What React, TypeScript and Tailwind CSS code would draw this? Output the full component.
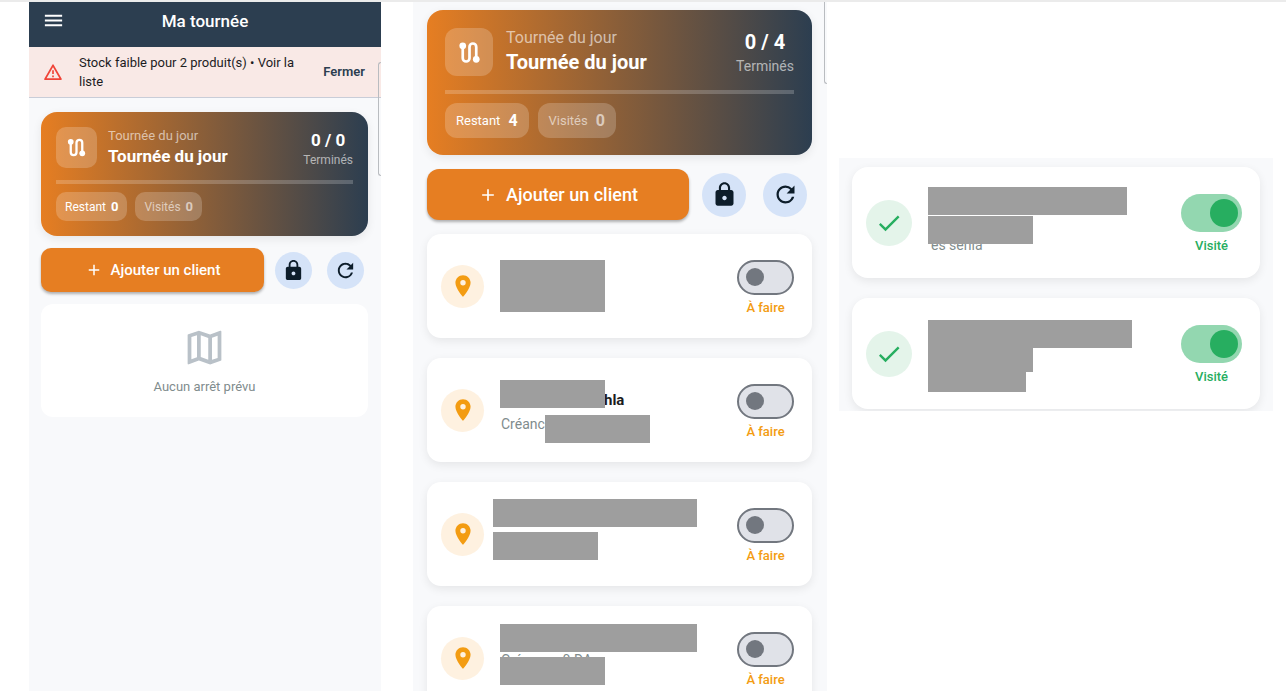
import { useState } from 'react'
import type { ReactNode } from 'react'
import { MdAdd, MdCheck, MdLocationOn, MdLock, MdMenu, MdOutlineMap, MdRefresh } from 'react-icons/md'

type Size = 'sm' | 'lg'

type Stop = {
  id: string
  visited: boolean
  name?: string
  detail?: string
  detailClass?: string
  // Grey bars laid over the private parts of a stop.
  masks: string[]
}

const pendingStops: Stop[] = [
  { id: 'p1', visited: false, masks: ['left-0 top-[26px] h-[52px] w-[105px]'] },
  {
    id: 'p2',
    visited: false,
    name: 'hla',
    detail: 'Créance',
    detailClass: 'pl-px pt-1',
    masks: ['left-0 top-[22px] h-[28px] w-[105px]', 'left-[45px] top-[57px] h-[28px] w-[105px]'],
  },
  {
    id: 'p3',
    visited: false,
    masks: ['-left-[7px] top-[17px] h-[28px] w-[204px]', '-left-[7px] top-[50px] h-[28px] w-[105px]'],
  },
  {
    id: 'p4',
    visited: false,
    detail: 'Créance : 0 DA',
    detailClass: 'pl-px pt-[44px]',
    masks: ['left-0 top-[18px] h-[28px] w-[197px]', 'left-0 top-[51px] h-[28px] w-[105px]'],
  },
]

const visitedStops: Stop[] = [
  {
    id: 'v1',
    visited: true,
    detail: 'es senia',
    detailClass: 'pl-[3px] pt-[68px]',
    masks: ['left-0 top-[20px] h-[28px] w-[199px]', 'left-0 top-[49px] h-[28px] w-[105px]'],
  },
  {
    id: 'v2',
    visited: true,
    masks: [
      'left-0 top-[22px] h-[28px] w-[204px]',
      'left-0 top-[50px] h-[24px] w-[105px]',
      'left-0 top-[74px] h-[20px] w-[98px]',
    ],
  },
]

export default function App() {
  return (
    <main className="grid h-screen grid-cols-[minmax(0,352fr)_minmax(0,446fr)_minmax(0,446fr)] items-start overflow-hidden border-t-2 border-[#ebebeb] bg-white pl-[29px] pr-[13px] font-[Roboto,sans-serif] text-[#1c1c1e]">
      <EmptyTourScreen />
      <TourScreen />
      <VisitedScreen />
    </main>
  )
}

function EmptyTourScreen() {
  const [alertOpen, setAlertOpen] = useState(true)

  return (
    <section className="relative h-screen bg-[#f8f9fb]">
      <header className="grid h-[45px] grid-cols-[48px_1fr_48px] items-center bg-[#2c3e50] pb-2 text-white">
        <button type="button" aria-label="Menu" className="flex justify-center">
          <MdMenu className="size-[23px]" />
        </button>
        <h1 className="text-center text-[17px] font-medium leading-5">Ma tournée</h1>
      </header>

      {alertOpen && (
        <div className="flex items-center border-b border-[#c9cdd8] bg-[#f9e9e6] py-[6px] pl-[14px] pr-4">
          <WarningIcon className="size-5 shrink-0 text-[#f04438]" />
          <a href="#stock" className="ml-4 flex-1 text-[13px] leading-[19px]">
            Stock faible pour 2 produit(s) • Voir la liste
          </a>
          <button
            type="button"
            onClick={() => setAlertOpen(false)}
            className="ml-3 text-[13px] font-semibold text-[#2c3e50]"
          >
            Fermer
          </button>
        </div>
      )}

      <div className="flex flex-col gap-3 pl-3 pr-[13px] pt-[14px]">
        <TourCard size="sm" done={0} total={0} remaining={0} visited={0} />
        <Actions size="sm" />
        <div className="flex flex-col items-center gap-[9px] rounded-xl bg-white pb-[22px] pt-[21px]">
          <MdOutlineMap className="size-[45px] text-[#b9c1c8]" />
          <p className="text-[13px] leading-4 text-[#7f8c8d]">Aucun arrêt prévu</p>
        </div>
      </div>
      <ScrollEdge className="top-[60px] h-[114px] rounded-l-sm border-y" />
    </section>
  )
}

function TourScreen() {
  return (
    <section className="relative ml-8 h-screen bg-[#f8f9fb] pl-[14px] pr-[15px] pt-2">
      <div className="flex flex-col gap-[14px]">
        <TourCard size="lg" done={0} total={4} remaining={4} visited={0} />
        <Actions size="lg" />
        <StopList stops={pendingStops} />
      </div>
      <ScrollEdge className="top-0 h-[82px] rounded-bl-sm border-b" />
    </section>
  )
}

function VisitedScreen() {
  return (
    <section className="ml-3 mt-[156px] overflow-hidden bg-[#f8f9fb] px-[13px] pb-[2px] pt-[9px]">
      <StopList stops={visitedStops} />
    </section>
  )
}

function TourCard({
  size,
  done,
  total,
  remaining,
  visited,
}: {
  size: Size
  done: number
  total: number
  remaining: number
  visited: number
}) {
  const lg = size === 'lg'
  return (
    <article
      className={`rounded-2xl bg-linear-to-r/srgb from-[#e67e22] to-[#2c3e50] text-white shadow-[0_3px_10px_rgba(0,0,0,0.08)] ${
        lg ? 'px-[18px] pb-[17px] pt-[18px]' : 'p-[15px]'
      }`}
    >
      <div className="flex items-center">
        <div
          className={`flex shrink-0 items-center justify-center bg-white/20 ${
            lg ? 'size-12 rounded-xl' : 'size-[41px] rounded-[10px]'
          }`}
        >
          <RouteIcon className={lg ? 'size-[27px]' : 'size-[23px]'} />
        </div>
        <div className={lg ? 'ml-[13px] flex-1' : 'ml-[11px] flex-1'}>
          <p className={`text-white/60 ${lg ? 'text-[16px] leading-5' : 'text-[13px] leading-[18px]'}`}>
            Tournée du jour
          </p>
          <h2 className={`font-bold ${lg ? 'text-[20px] leading-7' : 'text-[17px] leading-[23px]'}`}>
            Tournée du jour
          </h2>
        </div>
        <div className="text-center">
          <p className={`font-bold ${lg ? 'text-[20px] leading-7' : 'text-[17px] leading-[26px]'}`}>
            {done} / {total}
          </p>
          <p className={`text-white/60 ${lg ? 'text-[14px] leading-5' : 'text-[12px] leading-[15px]'}`}>
            Terminés
          </p>
        </div>
      </div>

      <div className={lg ? 'mt-[14px] h-1 bg-white/20' : 'mt-3 h-1 bg-white/20'}>
        <div className="h-full bg-white" style={{ width: `${total ? (done / total) * 100 : 0}%` }} />
      </div>

      <div className={lg ? 'mt-[9px] flex gap-[9px]' : 'mt-2 flex gap-2'}>
        <CountChip size={size} label="Restant" count={remaining} className="bg-white/20" />
        <CountChip size={size} label="Visités" count={visited} className="bg-white/20 text-white/60" />
      </div>
    </article>
  )
}

function CountChip({
  size,
  label,
  count,
  className,
}: {
  size: Size
  label: string
  count: number
  className: string
}) {
  const lg = size === 'lg'
  return (
    <div
      className={`flex items-center ${
        lg ? 'h-[35px] gap-2 rounded-xl px-[11px] text-[13px]' : 'h-[29px] gap-[5px] rounded-[10px] px-[9px] text-[12px]'
      } ${className}`}
    >
      <span>{label}</span>
      <span className={lg ? 'text-[16px] font-bold' : 'text-[13px] font-bold'}>{count}</span>
    </div>
  )
}

function Actions({ size }: { size: Size }) {
  const lg = size === 'lg'
  return (
    <div className={lg ? 'flex items-center pr-[5px]' : 'flex items-center pr-1'}>
      <button
        type="button"
        className={`flex flex-1 items-center justify-center gap-2 bg-[#e67e22] font-medium text-white shadow-[0_2px_3px_rgba(0,0,0,0.3)] ${
          lg ? 'h-[51px] rounded-xl text-[18px]' : 'h-11 rounded-[10px] text-[15px]'
        }`}
      >
        <MdAdd className={lg ? 'size-5' : 'size-[18px]'} />
        Ajouter un client
      </button>
      <RoundButton size={size} label="Verrouiller" className={lg ? 'ml-[13px]' : 'ml-[11px]'}>
        <MdLock className={lg ? 'size-[27px]' : 'size-[23px]'} />
      </RoundButton>
      <RoundButton size={size} label="Actualiser" className={lg ? 'ml-[17px]' : 'ml-[15px]'}>
        <MdRefresh className={lg ? 'size-[27px]' : 'size-[23px]'} />
      </RoundButton>
    </div>
  )
}

function RoundButton({
  size,
  label,
  className,
  children,
}: {
  size: Size
  label: string
  className: string
  children: ReactNode
}) {
  return (
    <button
      type="button"
      aria-label={label}
      className={`flex shrink-0 items-center justify-center rounded-full bg-[#d5e3f8] text-[#0d1d2a] ${
        size === 'lg' ? 'size-11' : 'size-[37px]'
      } ${className}`}
    >
      {children}
    </button>
  )
}

function StopList({ stops }: { stops: Stop[] }) {
  const [visited, setVisited] = useState<Record<string, boolean>>(
    Object.fromEntries(stops.map((s) => [s.id, s.visited])),
  )

  return (
    <ul className="flex flex-col gap-5">
      {stops.map((stop) => (
        <StopCard
          key={stop.id}
          stop={stop}
          visited={visited[stop.id]}
          onToggle={(v) => setVisited({ ...visited, [stop.id]: v })}
        />
      ))}
    </ul>
  )
}

function StopCard({
  stop,
  visited,
  onToggle,
}: {
  stop: Stop
  visited: boolean
  onToggle: (v: boolean) => void
}) {
  return (
    <li
      className={`flex items-center bg-white pl-[14px] pr-[18px] shadow-[0_3px_10px_rgba(0,0,0,0.08)] ${
        visited ? 'h-[111px] rounded-2xl' : 'h-[104px] rounded-[14px]'
      }`}
    >
      {visited ? (
        <div className="flex size-[46px] shrink-0 items-center justify-center rounded-full bg-[#e4f4ea] text-[#27ae60]">
          <MdCheck className="size-7" />
        </div>
      ) : (
        <div className="flex size-[43px] shrink-0 items-center justify-center rounded-full bg-[#fef1e0] text-[#f39c12]">
          <MdLocationOn className="size-[26px]" />
        </div>
      )}

      <div className="relative ml-4 flex-1 self-stretch">
        {stop.name && <p className="pl-[104px] pt-8 text-[15px] font-bold leading-5">{stop.name}</p>}
        {stop.detail && (
          <p className={`text-[14px] leading-5 text-[#7f8c8d] ${stop.detailClass ?? ''}`}>{stop.detail}</p>
        )}
        {stop.masks.map((mask) => (
          <span key={mask} className={`absolute bg-[#9e9e9e] ${mask}`} />
        ))}
      </div>

      <label className="relative flex flex-col items-center pt-1">
        <input
          type="checkbox"
          role="switch"
          checked={visited}
          onChange={(e) => onToggle(e.target.checked)}
          className="sr-only"
        />
        {visited ? (
          <span className="flex h-[38px] w-[61px] items-center justify-end rounded-full bg-[#93d7b0] pr-1">
            <span className="size-7 rounded-full bg-[#27ae60]" />
          </span>
        ) : (
          <span className="flex h-[35px] w-[57px] items-center rounded-full border-2 border-[#72777f] bg-[#e0e2e8] pl-[7px]">
            <span className="size-[18px] rounded-full bg-[#72777f]" />
          </span>
        )}
        <span
          className={`text-[13px] font-medium leading-[18px] ${
            visited ? 'pt-[5px] text-[#27ae60]' : 'pt-1 text-[#f39c12]'
          }`}
        >
          {visited ? 'Visité' : 'À faire'}
        </span>
      </label>
    </li>
  )
}

function ScrollEdge({ className }: { className: string }) {
  return <div className={`absolute right-0 w-[3px] border-l border-[#b9bcc0] ${className}`} />
}

function RouteIcon({ className }: { className: string }) {
  return (
    <svg viewBox="0 0 24 24" fill="none" className={className} aria-hidden="true">
      <path d="M6 6v11a3 3 0 0 0 6 0V7a3 3 0 0 1 6 0v11" stroke="currentColor" strokeWidth="2.4" />
      <circle cx="6" cy="6" r="3" fill="currentColor" />
      <circle cx="18" cy="18" r="3" fill="currentColor" />
    </svg>
  )
}

function WarningIcon({ className }: { className: string }) {
  return (
    <svg viewBox="0 0 24 24" fill="none" className={className} aria-hidden="true">
      <path
        d="M12 4 2.5 20.5h19z"
        stroke="currentColor"
        strokeWidth="2.2"
        strokeLinejoin="round"
      />
      <path d="M12 10v4.5M12 16.2v2" stroke="currentColor" strokeWidth="2" />
    </svg>
  )
}
